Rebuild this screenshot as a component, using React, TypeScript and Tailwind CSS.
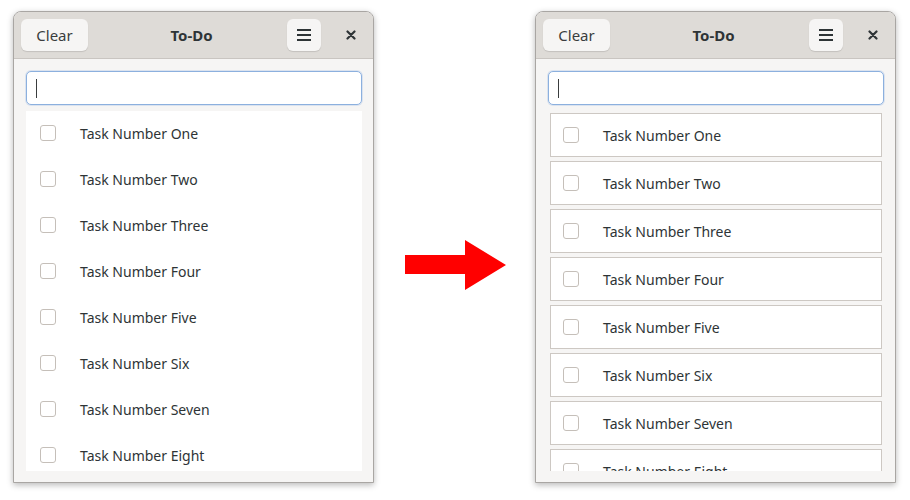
import React from "react";

const tasks = ["One", "Two", "Three", "Four", "Five", "Six", "Seven", "Eight"];

function Checkbox() {
  return <div className="w-[16px] h-[16px] shrink-0 rounded-[3px] border border-[#c5bfb9] bg-white" />;
}

function Header() {
  return (
    <div className="h-[47px] shrink-0 bg-[#dedbd7] border-b border-[#c9c5c1] grid grid-cols-[1fr_auto_1fr] items-center pl-[7px] pr-[11px]">
      <div className="flex">
        <div className="w-[67px] h-[32px] rounded-[6px] bg-[#f6f5f4] shadow-[0_1px_1px_rgba(0,0,0,0.12)] flex items-center justify-center text-[15px] text-[#3a3d3e]">
          Clear
        </div>
      </div>
      <div className="text-[15px] font-bold text-[#2e3436]">To-Do</div>
      <div className="flex items-center justify-end gap-[25px]">
        <div className="w-[34px] h-[32px] rounded-[6px] bg-[#f6f5f4] shadow-[0_1px_1px_rgba(0,0,0,0.12)] flex items-center justify-center">
          <svg width="16" height="14" viewBox="0 0 16 14">
            <rect x="1" y="1" width="14" height="2" fill="#2e3436" />
            <rect x="1" y="6" width="14" height="2" fill="#2e3436" />
            <rect x="1" y="11" width="14" height="2" fill="#2e3436" />
          </svg>
        </div>
        <div className="w-[10px] h-[24px] flex items-center justify-center mr-[6px]">
          <svg width="10" height="10" viewBox="0 0 10 10">
            <path d="M1.5 1.5 L8.5 8.5 M8.5 1.5 L1.5 8.5" stroke="#2e3436" strokeWidth="2.2" strokeLinecap="round" />
          </svg>
        </div>
      </div>
    </div>
  );
}

function Entry() {
  return (
    <div className="h-[34px] rounded-[5px] border border-[#8cb0de] bg-white flex items-center pl-[9px] shadow-[0_0_0_1px_rgba(140,176,222,0.25)]">
      <div className="w-[1px] h-[19px] bg-[#3a3d3e]" />
    </div>
  );
}

function Window({ children }: { children: React.ReactNode }) {
  return (
    <div className="w-[361px] h-[472px] shrink-0 flex flex-col rounded-t-[8px] border border-[#a9a6a3] bg-[#f6f5f4] overflow-hidden shadow-[0_2px_6px_rgba(0,0,0,0.28)]">
      <Header />
      <div className="flex-1 flex flex-col pt-[12px] pl-[12px] pr-[11px] pb-[11px] min-h-0">
        <Entry />
        <div className="mt-[6px] flex-1 min-h-0 overflow-hidden">{children}</div>
      </div>
    </div>
  );
}

export default function App() {
  const font = { fontFamily: '"Noto Sans", "Open Sans", sans-serif' };
  return (
    <div className="w-[910px] h-[500px] bg-white flex items-start pt-[11px] pl-[13px]" style={font}>
      <Window>
        <div className="h-full bg-white flex flex-col">
          {tasks.map((t) => (
            <div key={t} className="h-[46px] shrink-0 flex items-center pl-[14px] pb-[2px]">
              <Checkbox />
              <span className="ml-[24px] text-[14px] text-[#2e3436]">Task Number {t}</span>
            </div>
          ))}
        </div>
      </Window>
      <div className="w-[161px] shrink-0 pt-[229px] pl-[31px]">
        <svg width="101" height="51" viewBox="0 0 101 51">
          <polygon points="0,15 60,15 60,0 101,25 60,50 60,34 0,34" fill="#ff0000" />
        </svg>
      </div>
      <Window>
        <div className="h-full flex flex-col gap-[4px] px-[2px] pt-[2px]">
          {tasks.map((t) => (
            <div key={t} className="h-[44px] shrink-0 flex items-center pl-[12px] bg-white border border-[#cdc8c3]">
              <Checkbox />
              <span className="ml-[24px] text-[14px] text-[#2e3436]">Task Number {t}</span>
            </div>
          ))}
        </div>
      </Window>
    </div>
  );
}
